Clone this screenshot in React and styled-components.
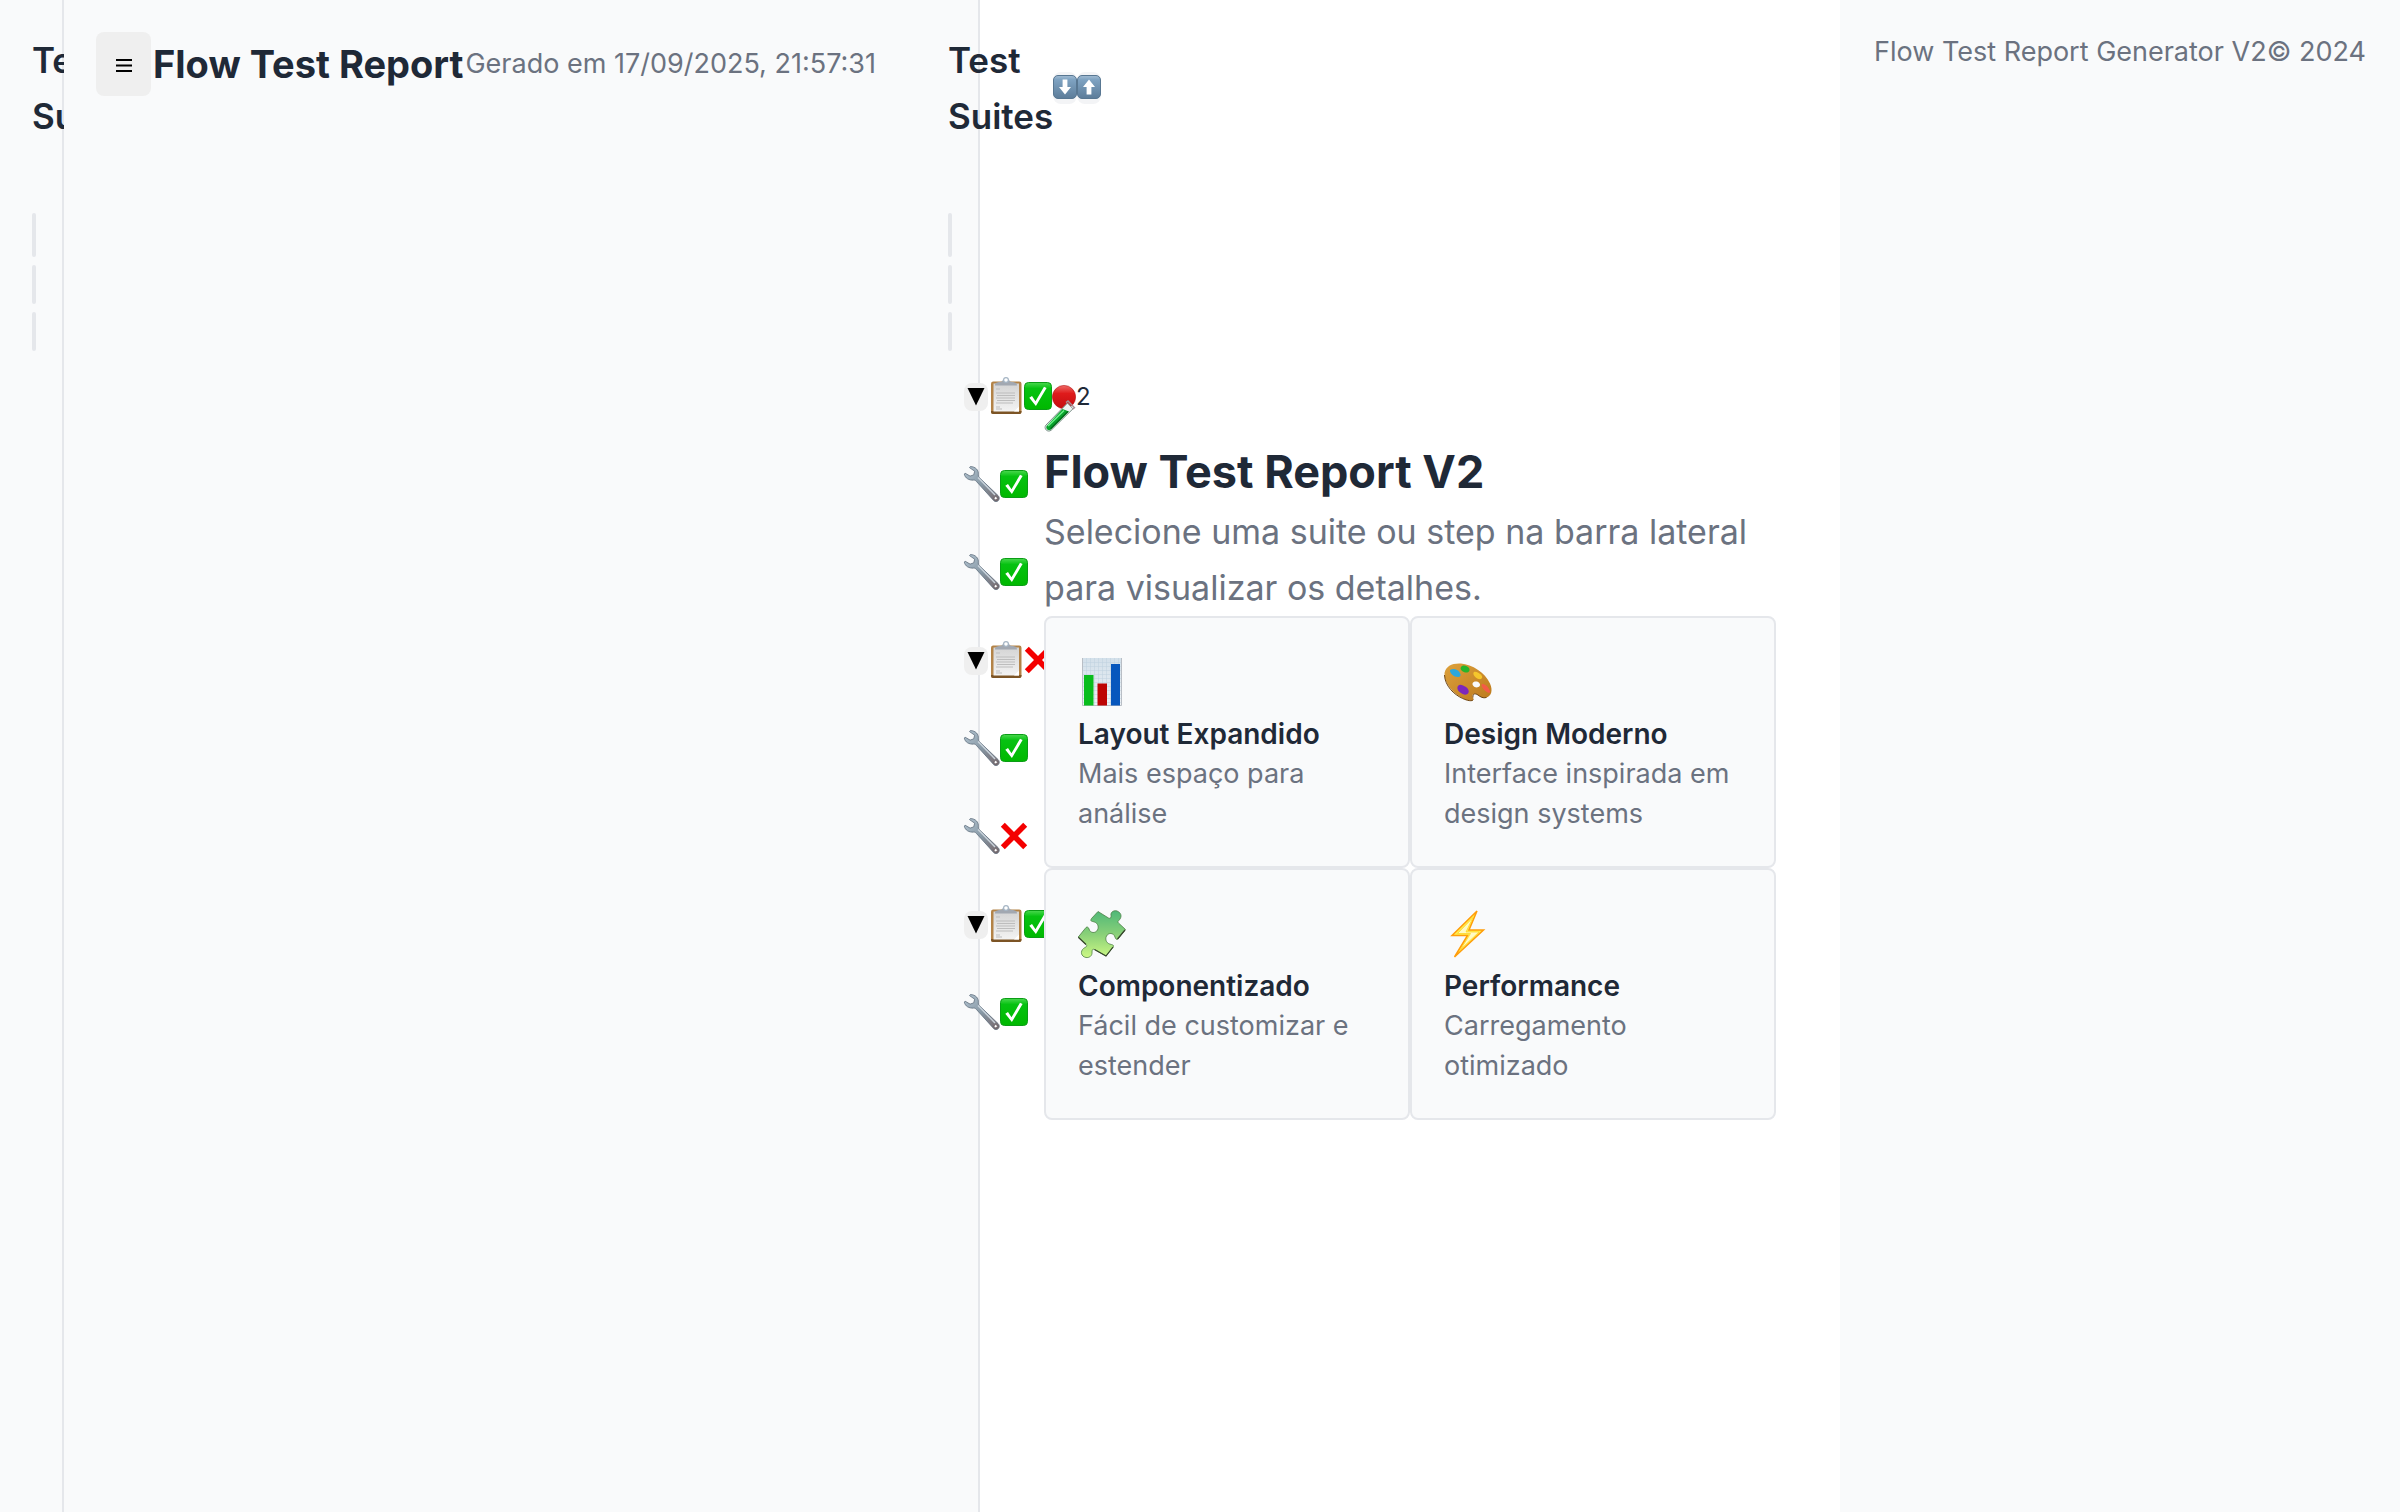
import React from "react";
import styled, { createGlobalStyle } from "styled-components";

const color = {
  surface: "#f9fafb",
  border: "#e5e7eb",
  text: "#1f2937",
  muted: "#6b7280",
  button: "#efefef",
};

const GlobalStyle = createGlobalStyle`
  *, *::before, *::after { box-sizing: border-box; }
  html, body, #root { margin: 0; min-height: 100vh; }
  body {
    background: #fff;
    color: ${color.text};
    font-family: Inter, "Liberation Sans", sans-serif;
    font-size: 27px;
    line-height: 40px;
  }
  h1, h2, h3, p, ul { margin: 0; padding: 0; }
  ul { list-style: none; }
  button { font: inherit; border: 0; padding: 0; cursor: pointer; }
`;

const Shell = styled.div`
  display: grid;
  grid-template-columns: 64px minmax(0, 852fr) 64px minmax(0, 860fr) minmax(0, 560fr);
  min-height: 100vh;
`;

const Sidebar = styled.aside`
  min-width: 0;
  padding: 32px 0 32px 32px;
  background: ${color.surface};
  border-right: 2px solid ${color.border};
`;

const SidebarHead = styled.div`
  display: flex;
  align-items: center;
  width: max-content;
`;

const SidebarTitle = styled.h2`
  width: min-content;
  font-size: 35px;
  line-height: 56px;
  font-weight: 600;
`;

const SquareButton = styled.button`
  display: flex;
  align-items: center;
  justify-content: center;
  flex: none;
  width: 24px;
  height: ${(p) => p.$height}px;
  border-radius: 8px;
  background: ${(p) => (p.$faint ? "#f3f4f6" : color.button)};
  color: #000;
`;

const Filters = styled.form`
  display: flex;
  flex-direction: column;
  gap: 8px;
  width: 4px;
  margin-top: 69px;
`;

const filterBar = `
  appearance: none;
  width: 4px;
  padding: 0;
  margin: 0;
  border: 2px solid ${color.border};
  border-radius: 2px;
  background: ${color.border};
`;

const SearchField = styled.input`
  ${filterBar}
  height: 44px;
`;

const FilterSelect = styled.select`
  ${filterBar}
  height: 39px;
`;

const Tree = styled.ul`
  width: max-content;
  padding: 2px 0 0 16px;
`;

const TreeRow = styled.li`
  display: flex;
  align-items: center;
  height: 88px;
  font-size: 24px;
`;

const Header = styled.header`
  min-width: 0;
  padding: 32px;
  background: ${color.surface};
  white-space: nowrap;
`;

const HeaderBar = styled.div`
  display: flex;
  align-items: center;
  gap: 2px;
  height: 64px;
`;

const MenuButton = styled.button`
  display: flex;
  align-items: center;
  justify-content: center;
  flex: none;
  width: 55px;
  height: 64px;
  border-radius: 8px;
  background: ${color.button};
`;

const HeaderTitle = styled.h1`
  font-size: 38px;
  line-height: 56px;
  font-weight: 700;
`;

const Muted = styled.span`
  color: ${color.muted};
`;

const Main = styled.main`
  display: flex;
  flex-direction: column;
  justify-content: center;
  min-width: 0;
  padding: 0 64px;
`;

const HeroIcon = styled.div`
  display: flex;
  align-items: center;
  height: 48px;
`;

const HeroTitle = styled.h2`
  font-size: 45px;
  line-height: 64px;
  font-weight: 700;
`;

const HeroText = styled.p`
  font-size: 34px;
  line-height: 56px;
  color: ${color.muted};
`;

const CardGrid = styled.div`
  display: grid;
  grid-template-columns: 1fr 1fr;
`;

const Card = styled.section`
  padding: 32px;
  background: ${color.surface};
  border: 2px solid ${color.border};
  border-radius: 8px;
`;

const CardIcon = styled.div`
  display: flex;
  align-items: center;
  height: 64px;
`;

const CardTitle = styled.h3`
  font-size: 28px;
  line-height: 40px;
  font-weight: 600;
`;

const CardText = styled.p`
  color: ${color.muted};
`;

const Footer = styled.footer`
  display: flex;
  justify-content: center;
  align-items: flex-start;
  padding: 32px;
  background: ${color.surface};
  white-space: nowrap;
`;

const Glyph = styled.svg`
  display: block;
  flex: none;
  overflow: visible;
`;

const Defs = styled.svg`
  position: absolute;
`;

function Icon({ size, box = 36, children }) {
  return (
    <Glyph width={size} height={size} viewBox={`0 0 ${box} ${box}`} aria-hidden="true">
      {children}
    </Glyph>
  );
}

const Gradients = () => (
  <Defs width="0" height="0" aria-hidden="true">
    <defs>
      <linearGradient id="key" x1="0" y1="0" x2="0" y2="1">
        <stop offset="0" stopColor="#a3bdd3" />
        <stop offset="0.18" stopColor="#7fa3c2" />
        <stop offset="1" stopColor="#5c7c99" />
      </linearGradient>
      <linearGradient id="check" x1="0" y1="0" x2="0" y2="1">
        <stop offset="0" stopColor="#4bd84f" />
        <stop offset="0.22" stopColor="#06c211" />
        <stop offset="1" stopColor="#00b800" />
      </linearGradient>
      <linearGradient id="ball" x1="0" y1="0" x2="0" y2="1">
        <stop offset="0" stopColor="#ee6a66" />
        <stop offset="0.35" stopColor="#df1b1b" />
        <stop offset="1" stopColor="#c40d10" />
      </linearGradient>
      <linearGradient id="steel" x1="0" y1="0" x2="1" y2="1">
        <stop offset="0" stopColor="#b4c5d2" />
        <stop offset="0.5" stopColor="#8798a5" />
        <stop offset="1" stopColor="#75666a" />
      </linearGradient>
      <linearGradient id="puzzle" x1="0" y1="0" x2="0" y2="1">
        <stop offset="0" stopColor="#4fb878" />
        <stop offset="0.5" stopColor="#89d078" />
        <stop offset="1" stopColor="#ccf884" />
      </linearGradient>
      <linearGradient id="palette" x1="0" y1="0" x2="1" y2="1">
        <stop offset="0" stopColor="#dda13c" />
        <stop offset="1" stopColor="#bd791c" />
      </linearGradient>
      <linearGradient id="paper" x1="0" y1="0" x2="0" y2="1">
        <stop offset="0" stopColor="#d4d4d4" />
        <stop offset="1" stopColor="#f3f3f3" />
      </linearGradient>
      <linearGradient id="sheet" x1="0" y1="0" x2="0" y2="1">
        <stop offset="0" stopColor="#d3e0ea" />
        <stop offset="1" stopColor="#eef2f6" />
      </linearGradient>
    </defs>
  </Defs>
);

const ArrowKey = ({ up }) => (
  <Icon size={24} box={24}>
    <rect x="0.5" y="-0.5" width="23" height="23" rx="4.5" fill="url(#key)" stroke="#587792" />
    <path
      d={up ? "M12 3.5 18 11h-3.6v7.5H9.6V11H6z" : "M12 18.5 18 11h-3.6V3.5H9.6V11H6z"}
      fill="#fff"
    />
  </Icon>
);

const Check = () => (
  <Icon size={28} box={28}>
    <rect x="0.5" y="-0.5" width="27" height="27" rx="4" fill="url(#check)" stroke="#0b9d16" />
    <path d="M5.3 14.8l2.7-1.7 3.5 5.2L20 3.8l2.6 1.1-10.7 18.2z" fill="#fff" />
  </Icon>
);

const Cross = () => (
  <Icon size={28} box={28}>
    <path
      d="M4.8-.2 14 9 23.2-.2 27.2 3.8 18 13 27.2 22.2 23.2 26.2 14 17 4.8 26.2.8 22.2 10 13 .8 3.8z"
      fill="#f40000"
    />
  </Icon>
);

const Clipboard = () => (
  <Icon size={36}>
    <rect x="3" y="2.5" width="30.5" height="32.5" rx="2.2" fill="#b38347" />
    <path d="M3 32h30.5v1a2 2 0 0 1-2 2H5a2 2 0 0 1-2-2z" fill="#7c5425" />
    <rect x="5.5" y="4.5" width="25.5" height="28" fill="url(#paper)" />
    <path d="M5.5 32.5h20.5l5-5v5z" fill="#fff" />
    <path d="M8 10h4M8 14h19M9 16.5h18M8 19h19M9 21.5h18M8 24h17M8 28h4M8 30h6" stroke="#bdbdbd" />
    <path d="M7 6.6c0-3.2 2.2-3.4 5-3.6 2.4-.2 2.6-1.200 3-2.400h6c.4 1.200.6 2.200 3 2.400 2.800.2 5 .4 5 3.600z" fill="#a2a8b1" />
    <circle cx="18" cy="1" r="2.4" fill="#fff" stroke="#a5b5c4" strokeWidth="1.2" />
  </Icon>
);

const Wrench = () => (
  <Icon size={36}>
    <g transform="translate(0 -1)">
      <path
        d="M6.3.6c5-.1 8.7 3.5 8 8.3-.1 1 .2 1.8.9 2.6L34 29.5c3.4 3.5-.8 8-4.2 5.2L12.3 15.3c-.8-.9-1.6-1.3-2.7-1.2C5 14.4 1.1 12.3.3 8l.8-.8 5 2.9 3.6-1.2 1-3.7L5.5 1.6z"
        fill="url(#steel)"
        stroke="#5f6f7d"
        strokeWidth="0.8"
      />
      <path d="M14 11.5 31 29" stroke="#c9d3db" strokeWidth="1.4" />
      <circle cx="31.7" cy="32.2" r="1.6" fill="#fff" stroke="#5d5358" strokeWidth="0.7" />
    </g>
  </Icon>
);

const RedBall = () => (
  <Icon size={24} box={24}>
    <circle cx="12" cy="12" r="11.6" fill="url(#ball)" stroke="#b51416" strokeWidth="0.6" />
  </Icon>
);

const TestTube = () => (
  <Icon size={32} box={32}>
    <path d="M23.5 3 29 8.8 7.2 30.2C3.5 33-.8 28.5 2 25z" fill="#eef3f2" stroke="#7c9188" strokeWidth="1" />
    <path d="M18.5 9 25 11.5 7 29.5c-2.8 2-6-1-4.2-3.8z" fill="#08a22b" />
    <path d="M4 26 20 10.5" stroke="#6df08a" strokeWidth="1.6" />
    <path d="M6.5 28.8 24 11.5" stroke="#05641b" strokeWidth="1.2" />
    <path d="M22 2.6 24 .9l6.5 6.8-2 1.6" fill="none" stroke="#a98f95" strokeWidth="1.4" />
  </Icon>
);

const BarChart = () => (
  <Icon size={48} box={48}>
    <rect x="4" y="0" width="40" height="48" fill="url(#sheet)" />
    <path
      d="M8.5 0v48M12.5 0v48M16.5 0v48M20.5 0v48M24.5 0v48M28.5 0v48M32.5 0v48M36.5 0v48M40.5 0v48M4 4.5h40M4 8.5h40M4 12.5h40M4 16.5h40M4 20.5h40M4 24.5h40M4 28.5h40M4 32.5h40M4 36.5h40M4 40.5h40M4 44.5h40"
      stroke="#bfd0de"
      strokeWidth="0.5"
    />
    <path d="M4.5 0v47.5h39V0" fill="none" stroke="#b9bec5" />
    <path d="M6 17h9.5v30.5H6z" fill="#08bd1c" />
    <path d="M19.5 25.5H29v22h-9.5z" fill="#bd0404" />
    <path d="M33 6h9v41.5h-9z" fill="#0757bd" />
  </Icon>
);

const Palette = () => (
  <Icon size={48} box={48}>
    <path
      d="M.5 15C2 8 8 5 17 5.5c11 .8 24 9 29 20 3 6.5 1.5 12.5-3.5 14-3.5 1-6-.5-8.5-2.5-3-2.3-6-1.5-5.5 1.5.3 1.5 1.5 1.8.8 3.2-1 1.8-6 1-11-1.700C8 35 0 24 .5 15zM32 23.5c-3 0-4.200 2-3 4 1.300 2.200 5 2.500 6.500.8 1.600-2-.5-4.800-3.500-4.800z"
      fill="url(#palette)"
      fillRule="evenodd"
    />
    <path d="M.5 17C1 28 10 36.5 18.3 40.3c5 2.5 10 3.2 11 1.4M29 39.5c-.5-4 2-4.5 5-2.5 2.5 2 5 3.5 8.5 2.5" fill="none" stroke="#6e430f" strokeWidth="1" />
    <path d="M6 12c3-2 7-1 9 1.5 2 2.8 2.3 5-.5 5.5-4 .5-9-3.5-8.5-7z" fill="#2da7dc" />
    <path d="M17 9c2-2.5 6-1.5 8 1 1.5 2.8-.5 5-3.5 4.5S15.5 11.5 17 9z" fill="#26b52c" />
    <path d="M30 14c2-.8 6 1 8 4 .8 2.5-1 3.5-3.5 3-3.5-.8-6.5-5.5-4.5-7z" fill="#f5c62c" />
    <path d="M38 26c3 0 6 2.5 8 7 .3 2.5-1.5 2-4 .5S36.5 27.5 38 26z" fill="#f45b46" />
    <path d="M14 28c2-2.5 5-.5 8 1 2.5 1.8 4 5 1.5 7-2.5 1.5-4 .5-6.5-1-3-1.5-4.5-5-3-7z" fill="#7c27bb" />
  </Icon>
);

const Puzzle = () => (
  <Icon size={48} box={48}>
    <path
      d="M20 1.5 30.5 8c1.8 1 3-.5 2.5-2.5C32.3 2 36 0 39 1c4 1.5 5 5 3 8-1.3 2-3 2.5-1.5 4l7 6.5-7.5 9.5c-1.5 1-2.5 0-3-2-1.5-4.5-6.5-4.5-8.5-1-2 4 .5 8 5 8.5 2 .3 2.5 1.5 1.5 3L28 46 16.5 39.5c-2-.8-2.5.5-2.5 2.5.5 4-3 6-6 5.5-5-1-6-6-2.5-9 2-1.5 4.5-2 2.5-4L.3 27 8 17.5c1.2-1 2.5-.3 3 1.5 1.3 4.5 6.5 4.5 8.5 1 2-4-.5-8-5-8.5-2-.3-2-1.5-1-3z"
      fill="url(#puzzle)"
      stroke="#4e7f45"
      strokeWidth="0.8"
    />
    <path d="M47 20 39.5 29M35 37 28 46 16.5 39.5M8 34.5.3 27.3" fill="none" stroke="#36452c" strokeWidth="1.2" />
  </Icon>
);

const Bolt = () => (
  <Icon size={48} box={48}>
    <path
      d="M33 1 8 25.5h15.5L10.5 47 39.5 20H25z"
      fill="#ffee4d"
      stroke="#ff9d0a"
      strokeWidth="1.5"
      strokeLinejoin="miter"
    />
    <path d="M29 7.5 13.5 23.5h13l-10 16L35 22H22z" fill="#fffbc4" stroke="#ffd42a" strokeWidth="0.8" />
  </Icon>
);

const tree = [
  { suite: true, passed: true, failures: 2 },
  { passed: true },
  { passed: true },
  { suite: true, passed: false },
  { passed: true },
  { passed: false },
  { suite: true, passed: true },
  { passed: true },
];

const cards = [
  { icon: BarChart, title: "Layout Expandido", text: "Mais espaço para análise" },
  { icon: Palette, title: "Design Moderno", text: "Interface inspirada em design systems" },
  { icon: Puzzle, title: "Componentizado", text: "Fácil de customizar e estender" },
  { icon: Bolt, title: "Performance", text: "Carregamento otimizado" },
];

function FilterForm() {
  return (
    <Filters>
      <SearchField type="search" aria-label="Buscar" />
      <FilterSelect aria-label="Status" />
      <FilterSelect aria-label="Prioridade" />
    </Filters>
  );
}

function TreeItem({ suite, passed, failures }) {
  return (
    <TreeRow>
      {suite && (
        <SquareButton type="button" $height={28} aria-label="Recolher suite">
          <Icon size={18} box={18}>
            <path d="M.5 0h17L9 17.5z" fill="#000" />
          </Icon>
        </SquareButton>
      )}
      {suite ? <Clipboard /> : <Wrench />}
      {passed ? <Check /> : <Cross />}
      {failures && (
        <>
          <RedBall />
          {failures}
        </>
      )}
    </TreeRow>
  );
}

export default function App() {
  return (
    <>
      <GlobalStyle />
      <Gradients />
      <Shell>
        <Sidebar>
          <SidebarTitle>Test Suites</SidebarTitle>
          <FilterForm />
        </Sidebar>

        <Header>
          <HeaderBar>
            <MenuButton type="button" aria-label="Menu">
              <Icon size={16} box={16}>
                <path d="M0 4h16M0 9.5h16M0 15h16" stroke="#000" strokeWidth="2" />
              </Icon>
            </MenuButton>
            <HeaderTitle>Flow Test Report</HeaderTitle>
            <Muted>Gerado em 17/09/2025, 21:57:31</Muted>
          </HeaderBar>
        </Header>

        <Sidebar>
          <SidebarHead>
            <SidebarTitle>Test Suites</SidebarTitle>
            <SquareButton type="button" $height={32} $faint aria-label="Expandir tudo">
              <ArrowKey />
            </SquareButton>
            <SquareButton type="button" $height={32} $faint aria-label="Recolher tudo">
              <ArrowKey up />
            </SquareButton>
          </SidebarHead>
          <FilterForm />
          <Tree>
            {tree.map((item, i) => (
              <TreeItem key={i} {...item} />
            ))}
          </Tree>
        </Sidebar>

        <Main>
          <HeroIcon>
            <TestTube />
          </HeroIcon>
          <HeroTitle>Flow Test Report V2</HeroTitle>
          <HeroText>Selecione uma suite ou step na barra lateral para visualizar os detalhes.</HeroText>
          <CardGrid>
            {cards.map(({ icon: Art, title, text }) => (
              <Card key={title}>
                <CardIcon>
                  <Art />
                </CardIcon>
                <CardTitle>{title}</CardTitle>
                <CardText>{text}</CardText>
              </Card>
            ))}
          </CardGrid>
        </Main>

        <Footer>
          <Muted>Flow Test Report Generator V2</Muted>
          <Muted>© 2024</Muted>
        </Footer>
      </Shell>
    </>
  );
}
